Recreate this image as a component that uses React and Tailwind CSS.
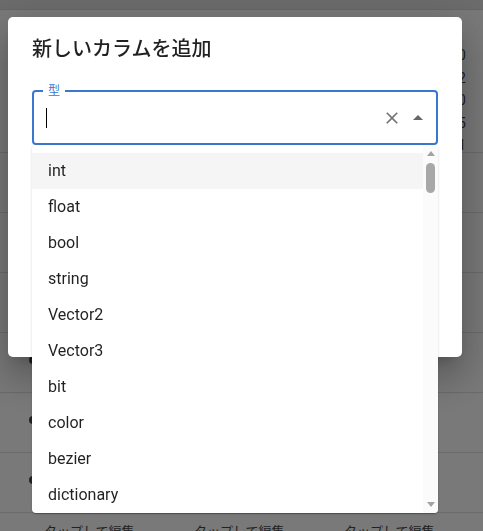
import React from 'react';

const types = ['int', 'float', 'bool', 'string', 'Vector2', 'Vector3', 'bit', 'color', 'bezier', 'dictionary'];

// faint page behind the dialog
function BackPage() {
  return (
    <div className="flex flex-col">
      <div className="h-[10px] bg-[#d8d8d8] border-b border-[#cdcdcd]" />
      <div className="h-[143px] flex justify-end pr-[17px] pt-[34px] border-b border-[#d6d6d6]">
        <div className="flex flex-col items-end text-[14px] leading-[22.5px] text-[#444]">
          <span>¥1,200</span>
          <span>32</span>
          <span>10</span>
          <span>15</span>
          <span>21</span>
        </div>
      </div>
      {[0, 1, 2, 3, 4, 5].map((i) => (
        <div key={i} className="h-[60px] flex items-center pl-[29px] pb-[6px] border-b border-[#d6d6d6]">
          <span className="w-[8px] h-[8px] rounded-full bg-[#444]" />
        </div>
      ))}
      <div className="flex pt-[9px] pl-[40px] gap-[60px] text-[13px] text-[#444]">
        {[0, 1, 2].map((i) => (
          <div key={i} className="flex items-center gap-1 w-[90px] whitespace-nowrap">
            <span className="w-[6px] h-[6px] rounded-full bg-[#333]" />
            <span>タップして編集</span>
          </div>
        ))}
      </div>
    </div>
  );
}

function Scrollbar() {
  return (
    <div className="w-[15px] flex flex-col bg-[#fbfbfb]">
      <div className="h-[17px] flex items-center justify-center">
        <svg width="8" height="5" viewBox="0 0 8 5"><path d="M4 0 8 5H0z" fill="#a3a3a3" /></svg>
      </div>
      <div className="flex-1">
        <div className="mt-[1px] mx-[3px] h-[30px] rounded-full bg-[#a8a8a8]" />
      </div>
      <div className="h-[17px] flex items-center justify-center">
        <svg width="8" height="5" viewBox="0 0 8 5"><path d="M0 0h8L4 5z" fill="#a3a3a3" /></svg>
      </div>
    </div>
  );
}

export default function App() {
  return (
    <div className="relative h-[531px] w-full overflow-hidden bg-[#f2f2f2] font-[Roboto,'Noto_Sans_CJK_JP',sans-serif]">
      <BackPage />

      {/* backdrop */}
      <div className="fixed inset-0 bg-black/50" />

      <div className="fixed inset-0 pl-[8px] pt-[17px]">
        <div className="w-[454px] h-[340px] bg-white rounded-[5px] shadow-[0px_11px_15px_-7px_rgba(0,0,0,0.2),0px_24px_38px_3px_rgba(0,0,0,0.14),0px_9px_46px_8px_rgba(0,0,0,0.12)]">
          <h2 className="px-6 py-4 text-[20px] leading-[32px] font-medium text-[rgba(0,0,0,0.87)]">
            新しいカラムを追加
          </h2>

          <div className="px-6 pt-[9px]">
            <div className="relative">
              <div className="relative h-[55px] border-2 border-[#3a77cf] rounded-[4px] flex items-center pl-[12px] pr-[6px]">
                <span className="absolute left-[9px] -top-[9px] px-[5px] bg-white text-[12px] leading-[16px] text-[#3a77cf]">
                  型
                </span>
                <span className="w-px h-[20px] bg-black" />
                <div className="flex-1" />
                <div className="w-[28px] h-[28px] flex items-center justify-center">
                  <svg width="20" height="20" viewBox="0 0 24 24">
                    <path d="M19 6.41 17.59 5 12 10.59 6.41 5 5 6.41 10.59 12 5 17.59 6.41 19 12 13.41 17.59 19 19 17.59 13.41 12z" fill="#757575" />
                  </svg>
                </div>
                <div className="w-[24px] h-[24px] flex items-center justify-center">
                  <svg width="24" height="24" viewBox="0 0 24 24">
                    <path d="M7 14l5-5 5 5z" fill="#666" />
                  </svg>
                </div>
              </div>

              {/* options popup */}
              <div className="absolute left-0 right-0 top-full z-10 h-[368px] flex overflow-hidden bg-white rounded-[4px] shadow-[0px_2px_1px_-1px_rgba(0,0,0,0.2),0px_1px_1px_0px_rgba(0,0,0,0.14),0px_1px_3px_0px_rgba(0,0,0,0.12)]">
                <ul className="flex-1 pt-2">
                  {types.map((t, i) => (
                    <li
                      key={t}
                      className={
                        'h-[36px] px-4 flex items-center text-[16px] leading-6 text-[rgba(0,0,0,0.87)] ' +
                        (i === 0 ? 'bg-[#f5f5f5]' : '')
                      }
                    >
                      {t}
                    </li>
                  ))}
                </ul>
                <Scrollbar />
              </div>
            </div>
          </div>
        </div>
      </div>
    </div>
  );
}
